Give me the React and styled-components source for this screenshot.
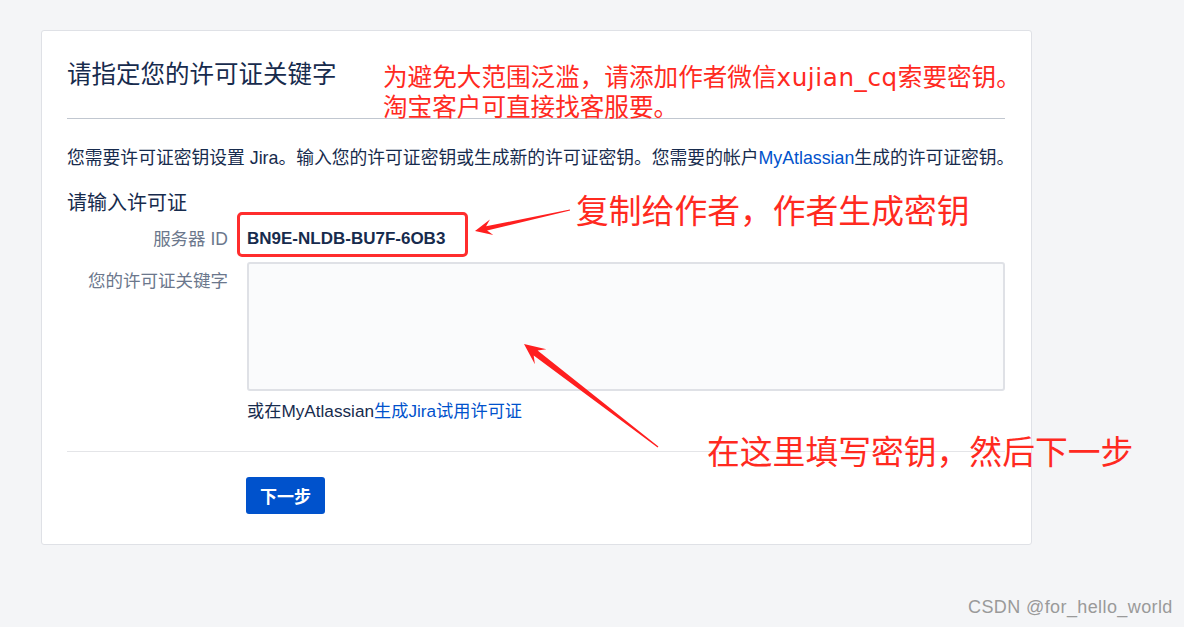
import React from "react";
import styled, { createGlobalStyle } from "styled-components";

const GlobalStyle = createGlobalStyle`
  html, body {
    margin: 0;
    padding: 0;
    background: #f4f5f7;
  }
  body {
    font-family: "Liberation Sans", "Noto Sans CJK SC", sans-serif;
    color: #172b4d;
  }
`;

const CJK = `"Liberation Sans", "Noto Sans CJK SC", sans-serif`;

const Page = styled.div`
  position: relative;
  width: 1184px;
  height: 627px;
  padding: 30px 0 0 41px;
  box-sizing: border-box;
  overflow: hidden;
`;

const Card = styled.section`
  width: 991px;
  box-sizing: border-box;
  background: #fff;
  border: 1px solid #dfe1e6;
  border-radius: 3px;
  padding: 28px 26px 30px 25px;
`;

const Header = styled.header`
  border-bottom: 1px solid #c1c7d0;
  padding-bottom: 27px;
`;

const Title = styled.h1`
  margin: 0;
  font-family: ${CJK};
  font-size: 24.5px;
  line-height: 32px;
  font-weight: 400;
  color: #172b4d;
`;

const Description = styled.p`
  margin: 27px 0 0;
  font-size: 17.8px;
  line-height: 24px;
  white-space: nowrap;
  color: #172b4d;
`;

const Link = styled.a`
  color: #0052cc;
  text-decoration: none;
`;

const SectionTitle = styled.h2`
  margin: 20px 0 0;
  font-size: 20px;
  line-height: 26px;
  font-weight: 400;
  color: #172b4d;
`;

const FieldGrid = styled.div`
  display: grid;
  grid-template-columns: 161px 1fr;
  column-gap: 19px;
  margin-top: 11px;
`;

const Label = styled.label`
  text-align: right;
  font-size: 17.5px;
  line-height: 24px;
  color: #6b778c;
  padding-top: ${(p) => p.$offset || 0}px;
`;

const Value = styled.div`
  font-size: 17px;
  line-height: 24px;
  font-weight: 700;
  color: #172b4d;
`;

const FieldCell = styled.div`
  margin-top: ${(p) => p.$top || 0}px;
`;

const TextArea = styled.textarea`
  display: block;
  width: 100%;
  height: 129px;
  box-sizing: border-box;
  resize: none;
  background: #fafbfc;
  border: 2px solid #dfe1e6;
  border-radius: 3px;
  outline: none;
  font-family: ${CJK};
`;

const Helper = styled.div`
  margin-top: 8px;
  font-size: 17.2px;
  line-height: 24px;
  color: #172b4d;
`;

const Divider = styled.hr`
  margin: 28px 0 0;
  border: 0;
  border-top: 1px solid #e4e5e8;
`;

const Actions = styled.div`
  margin-top: 25px;
  padding-left: 179px;
`;

const Button = styled.button`
  height: 37px;
  padding: 0 14px;
  border: 0;
  border-radius: 3px;
  background: #0052cc;
  color: #fff;
  font-family: ${CJK};
  font-size: 17px;
  font-weight: 700;
`;

const Note = styled.div`
  position: absolute;
  left: ${(p) => p.$x}px;
  top: ${(p) => p.$y}px;
  font-family: ${CJK};
  font-size: ${(p) => p.$size}px;
  line-height: ${(p) => p.$lh}px;
  color: #ff2a1f;
  white-space: nowrap;
`;

const Latin = styled.span`
  font-family: "DejaVu Sans", sans-serif;
  letter-spacing: 0.6px;
`;

const Highlight = styled.div`
  position: absolute;
  left: 237px;
  top: 212px;
  width: 231px;
  height: 45px;
  box-sizing: border-box;
  border: 3px solid #ff2d2d;
  border-radius: 5px;
`;

const Overlay = styled.svg`
  position: absolute;
  left: 0;
  top: 0;
  pointer-events: none;
`;

const Watermark = styled.div`
  position: absolute;
  left: 968px;
  top: 596px;
  font-family: "Liberation Sans", sans-serif;
  font-size: 18px;
  line-height: 22px;
  color: #9a9a9a;
  letter-spacing: 0.4px;
`;

function arrowPoints(tail, tip, headLen, headW, shaftW, tailW) {
  const dx = tip[0] - tail[0];
  const dy = tip[1] - tail[1];
  const len = Math.hypot(dx, dy);
  const u = [dx / len, dy / len];
  const n = [-u[1], u[0]];
  const at = (d, w) => [tip[0] - u[0] * d + n[0] * w, tip[1] - u[1] * d + n[1] * w];
  const pts = [
    tip,
    at(headLen, headW),
    at(headLen * 0.7, shaftW),
    [tail[0] + n[0] * tailW, tail[1] + n[1] * tailW],
    [tail[0] - n[0] * tailW, tail[1] - n[1] * tailW],
    at(headLen * 0.7, -shaftW),
    at(headLen, -headW),
  ];
  return pts.map((p) => p.map((v) => v.toFixed(1)).join(",")).join(" ");
}

export default function App() {
  return (
    <>
      <GlobalStyle />
      <Page>
        <Card>
          <Header>
            <Title>请指定您的许可证关键字</Title>
          </Header>
          <Description>
            您需要许可证密钥设置 Jira。输入您的许可证密钥或生成新的许可证密钥。您需要的帐户
            <Link href="#">MyAtlassian</Link>生成的许可证密钥。
          </Description>
          <SectionTitle>请输入许可证</SectionTitle>
          <FieldGrid>
            <Label>服务器 ID</Label>
            <Value>BN9E-NLDB-BU7F-6OB3</Value>
            <Label $offset={18}>您的许可证关键字</Label>
            <FieldCell $top={11}>
              <TextArea />
              <Helper>
                或在MyAtlassian<Link href="#">生成Jira试用许可证</Link>
              </Helper>
            </FieldCell>
          </FieldGrid>
          <Divider />
          <Actions>
            <Button>下一步</Button>
          </Actions>
        </Card>

        <Note $x={383} $y={63} $size={24.6} $lh={30}>
          为避免大范围泛滥，请添加作者微信<Latin>xujian_cq</Latin>索要密钥。
          <br />
          淘宝客户可直接找客服要。
        </Note>
        <Highlight />
        <Note $x={576} $y={192} $size={32.8} $lh={40}>
          复制给作者，作者生成密钥
        </Note>
        <Note $x={707} $y={433} $size={32.8} $lh={40}>
          在这里填写密钥，然后下一步
        </Note>
        <Overlay width="1184" height="627" viewBox="0 0 1184 627">
          <polygon fill="#ff1f1f" points={arrowPoints([570, 210], [475, 231], 17, 8, 2.2, 0.6)} />
          <polygon fill="#ff1f1f" points={arrowPoints([658, 447], [524, 344], 21, 9.5, 3.2, 0.6)} />
        </Overlay>
        <Watermark>CSDN @for_hello_world</Watermark>
      </Page>
    </>
  );
}
